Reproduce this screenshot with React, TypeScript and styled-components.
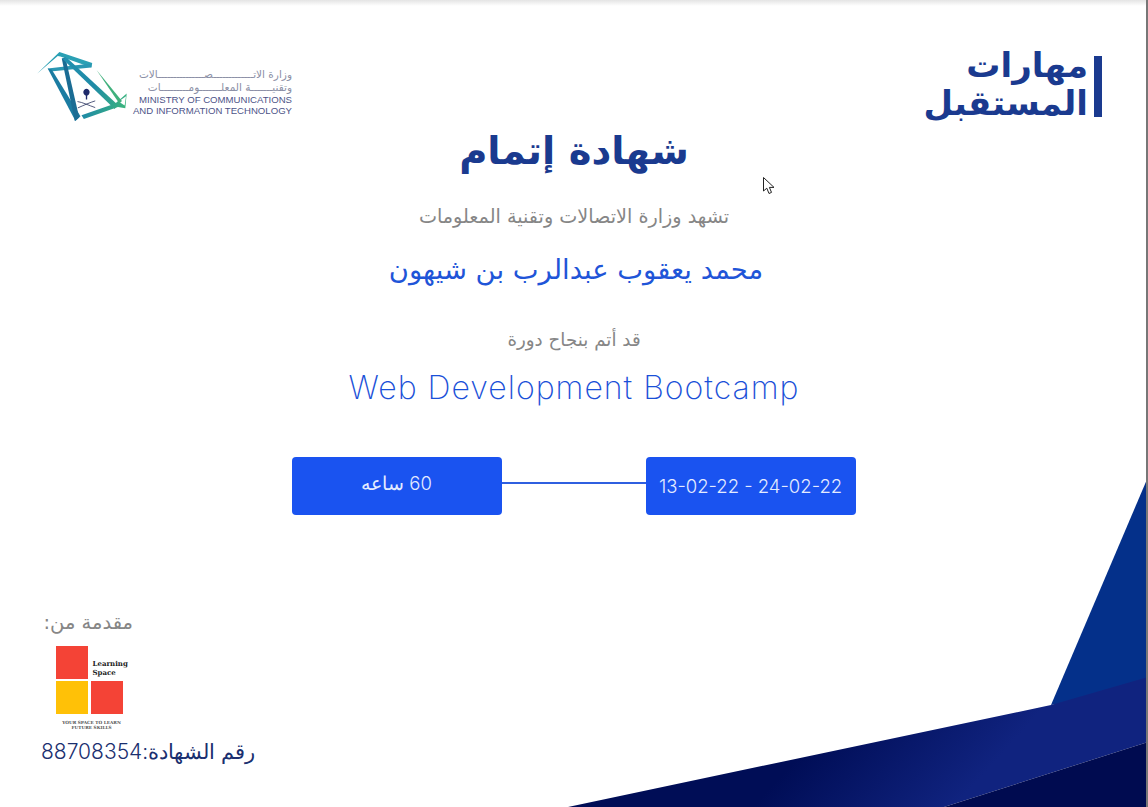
import React from "react";
import styled, { createGlobalStyle } from "styled-components";

const Global = createGlobalStyle`
  html, body { margin: 0; padding: 0; background: #fff; }
  body { font-family: "Inter", "DejaVu Sans", sans-serif; }
`;

const Page = styled.main`
  position: relative;
  width: 1148px;
  height: 807px;
  overflow: hidden;
  background: #fff;
  display: flex;
  flex-direction: column;
  &::before {
    content: "";
    position: absolute;
    inset: 0 0 auto 0;
    height: 6px;
    background: linear-gradient(#e4e4e4, #fff);
  }
  &::after {
    content: "";
    position: absolute;
    inset: 0 0 0 auto;
    width: 2px;
    background: #777;
  }
`;

const Backdrop = styled.svg`
  position: absolute;
  inset: 0;
`;

const Header = styled.header`
  position: relative;
  display: flex;
  justify-content: space-between;
  align-items: flex-start;
  padding: 50px 46px 0 37px;
  height: 78px;
`;

const MinistryLogo = styled.div`
  display: flex;
  align-items: flex-start;
  gap: 5px;
`;

const MinistryText = styled.div`
  display: flex;
  flex-direction: column;
  align-items: flex-end;
  width: 158px;
  margin-top: 18px;
`;

const MinistryAr = styled.div`
  direction: rtl;
  font-family: "DejaVu Sans", sans-serif;
  font-size: 10.5px;
  line-height: 13px;
  color: #8c90a6;
  white-space: nowrap;
`;

const MinistryEn = styled.div`
  font-family: "Liberation Sans", sans-serif;
  font-size: 9.6px;
  line-height: 11px;
  color: #4d5388;
  white-space: nowrap;
`;

const SkillsLogo = styled.div`
  display: flex;
  align-items: flex-start;
  gap: 6px;
`;

const SkillsWords = styled.div`
  direction: rtl;
  margin-top: -4px;
  font-family: "DejaVu Sans", sans-serif;
  font-weight: 700;
  font-size: 34px;
  line-height: 38px;
  color: #1a3a8f;
  text-align: right;
  white-space: nowrap;
`;

const SkillsBar = styled.div`
  width: 8px;
  height: 61px;
  margin-top: 6px;
  background: #1a3a8f;
`;

const Body = styled.section`
  position: relative;
  display: flex;
  flex-direction: column;
  align-items: center;
  direction: rtl;
`;

const Title = styled.h1`
  margin: 0;
  font-family: "DejaVu Sans", sans-serif;
  font-size: 38.5px;
  line-height: 46px;
  font-weight: 700;
  color: #1a3a8f;
`;

const Lead = styled.p<{ $top: number; $size: number }>`
  margin: ${(p) => p.$top}px 0 0;
  font-family: "DejaVu Sans", sans-serif;
  font-size: ${(p) => p.$size}px;
  line-height: 24px;
  color: #868686;
`;

const Name = styled.h2`
  margin: 22px 0 0 4px;
  font-family: "DejaVu Sans", sans-serif;
  font-size: 27.4px;
  line-height: 38px;
  font-weight: 400;
  color: #1f55d8;
`;

const Course = styled.h2`
  direction: ltr;
  margin: 14px 0 0;
  font-family: "Inter", sans-serif;
  font-size: 32px;
  line-height: 44px;
  font-weight: 200;
  letter-spacing: 1px;
  color: #1a50d8;
`;

const Timeline = styled.div`
  direction: ltr;
  display: flex;
  align-items: flex-start;
  margin-top: 47px;
  margin-left: -1px;
`;

const Pill = styled.div<{ $offset: number; $dir: string }>`
  direction: ${(p) => p.$dir};
  width: 210px;
  height: 58px;
  box-sizing: border-box;
  border-radius: 4px;
  background: #1a53f0;
  color: #e4ebff;
  display: flex;
  align-items: flex-start;
  justify-content: center;
  padding-top: ${(p) => p.$offset}px;
  font-family: "Inter", "DejaVu Sans", sans-serif;
  font-size: 18.5px;
  line-height: 26px;
  font-weight: 300;
  white-space: nowrap;
`;

const Connector = styled.div`
  width: 144px;
  height: 2px;
  margin-top: 25px;
  background: #2f5fe0;
`;

const Footer = styled.footer`
  position: relative;
  margin-top: 96px;
  padding-left: 41px;
  display: flex;
  flex-direction: column;
  align-items: flex-start;
`;

const Presented = styled.div`
  direction: rtl;
  width: 92px;
  font-family: "DejaVu Sans", sans-serif;
  font-size: 19.5px;
  line-height: 24px;
  color: #868686;
  text-align: right;
`;

const PartnerLogo = styled.div`
  margin: 11px 0 0 15px;
  width: 76px;
  display: flex;
  flex-direction: column;
`;

const PartnerGrid = styled.div`
  display: grid;
  grid-template-columns: 32px 32px;
  grid-template-rows: 33px 33px;
  gap: 2px 3px;
`;

const Tile = styled.div<{ $c: string }>`
  background: ${(p) => p.$c};
`;

const PartnerName = styled.div`
  font-family: "DejaVu Serif", serif;
  font-weight: 700;
  font-size: 7px;
  line-height: 9px;
  color: #222;
  padding: 13px 0 0 1.5px;
  white-space: nowrap;
`;

const PartnerTag = styled.div`
  margin-top: 7px;
  width: 71px;
  font-family: "DejaVu Serif", serif;
  font-weight: 700;
  font-size: 4.3px;
  line-height: 4.6px;
  color: #555;
  text-align: center;
  white-space: nowrap;
`;

const Serial = styled.div`
  direction: rtl;
  margin-top: 8px;
  font-family: "Inter", "DejaVu Sans", sans-serif;
  font-size: 21px;
  line-height: 28px;
  font-weight: 300;
  color: #1a2f6f;
  white-space: nowrap;
`;

const Cursor = styled.svg`
  position: absolute;
  left: 762px;
  top: 176px;
`;

export default function App() {
  return (
    <Page>
      <Global />
      <Backdrop width="1148" height="807" viewBox="0 0 1148 807">
        <defs>
          <linearGradient id="band" x1="850" y1="700" x2="960" y2="800" gradientUnits="userSpaceOnUse">
            <stop offset="0" stopColor="#000d56" />
            <stop offset="1" stopColor="#10237f" />
          </linearGradient>
        </defs>
        <polygon points="1148,477 1148,690 1051,705" fill="#04308a" />
        <polygon points="568,807 1051,705 1148,677 1148,742 944,807" fill="url(#band)" />
        <polygon points="1148,742 1148,807 944,807" fill="#000b50" />
      </Backdrop>

      <Header>
        <MinistryLogo>
          <svg width="92" height="72" viewBox="50 60 275 215">
            <defs>
              <linearGradient id="mark" x1="60" y1="120" x2="320" y2="220" gradientUnits="userSpaceOnUse">
                <stop offset="0" stopColor="#2292b4" />
                <stop offset="0.6" stopColor="#1f8aa6" />
                <stop offset="1" stopColor="#3bb57c" />
              </linearGradient>
            </defs>
            <path d="M50 131 L117 66 L215 99 L213 112 L120 79 L112 78 Z" fill="#2aa0b4" />
            <path d="M82 115 L212 100 L212 112 L90 124 Z" fill="#2a97b2" />
            <path d="M82 115 L94 118 L180 258 L165 272 Z" fill="#1b7ca2" />
            <path d="M124 85 L135 82 L176 262 L163 272 Z" fill="#1a6c94" />
            <path d="M125 85 L140 84 L292 224 L282 236 Z" fill="url(#mark)" />
            <path d="M183 255 L284 220 L318 190 L314 234 L292 230 L190 266 Z" fill="url(#mark)" />
            <path d="M294 214 L316 198 L312 226 Z" fill="#fff" />
            <path d="M228 120 L304 212 L296 220 Z" fill="#3fb07c" />
            <path d="M198 176 C189 178 186 186 191 193 L196 197 L196 208 L200 208 L200 197 L205 193 C210 186 207 178 198 176 Z" fill="#1f2a6b" />
            <path d="M171 214 C186 216 206 226 224 232 M224 212 C210 216 188 226 172 233" stroke="#2a3560" strokeWidth="2.4" fill="none" />
          </svg>
          <MinistryText>
            <MinistryAr>وزارة الاتـــــــــــــصـــــــــــــــالات</MinistryAr>
            <MinistryAr>وتقنيـــــــة المعلـــــــومـــــــــات</MinistryAr>
            <MinistryEn>MINISTRY OF COMMUNICATIONS</MinistryEn>
            <MinistryEn>AND INFORMATION TECHNOLOGY</MinistryEn>
          </MinistryText>
        </MinistryLogo>
        <SkillsLogo>
          <SkillsWords>
            مهارات
            <br />
            المستقبل
          </SkillsWords>
          <SkillsBar />
        </SkillsLogo>
      </Header>

      <Body>
        <Title>شهادة إتمام</Title>
        <Lead $top={31} $size={19.2}>تشهد وزارة الاتصالات وتقنية المعلومات</Lead>
        <Name>محمد يعقوب عبدالرب بن شيهون</Name>
        <Lead $top={39} $size={18.3}>قد أتم بنجاح دورة</Lead>
        <Course>Web Development Bootcamp</Course>
        <Timeline>
          <Pill $offset={13} $dir="rtl">60 ساعه</Pill>
          <Connector />
          <Pill $offset={16} $dir="ltr">13-02-22 - 24-02-22</Pill>
        </Timeline>
      </Body>

      <Footer>
        <Presented>مقدمة من:</Presented>
        <PartnerLogo>
          <PartnerGrid>
            <Tile $c="#f44336" />
            <PartnerName>
              Learning
              <br />
              Space
            </PartnerName>
            <Tile $c="#ffc107" />
            <Tile $c="#f44336" />
          </PartnerGrid>
          <PartnerTag>
            YOUR SPACE TO LEARN
            <br />
            FUTURE SKILLS
          </PartnerTag>
        </PartnerLogo>
        <Serial>رقم الشهادة:88708354</Serial>
      </Footer>

      <Cursor width="14" height="20" viewBox="0 0 14 20">
        <path d="M1.5 1.5 V15 L4.8 12.2 L7 17.5 L9.5 16.4 L7.4 11.4 H12 Z" fill="#fff" stroke="#222" strokeWidth="1" />
      </Cursor>
    </Page>
  );
}
